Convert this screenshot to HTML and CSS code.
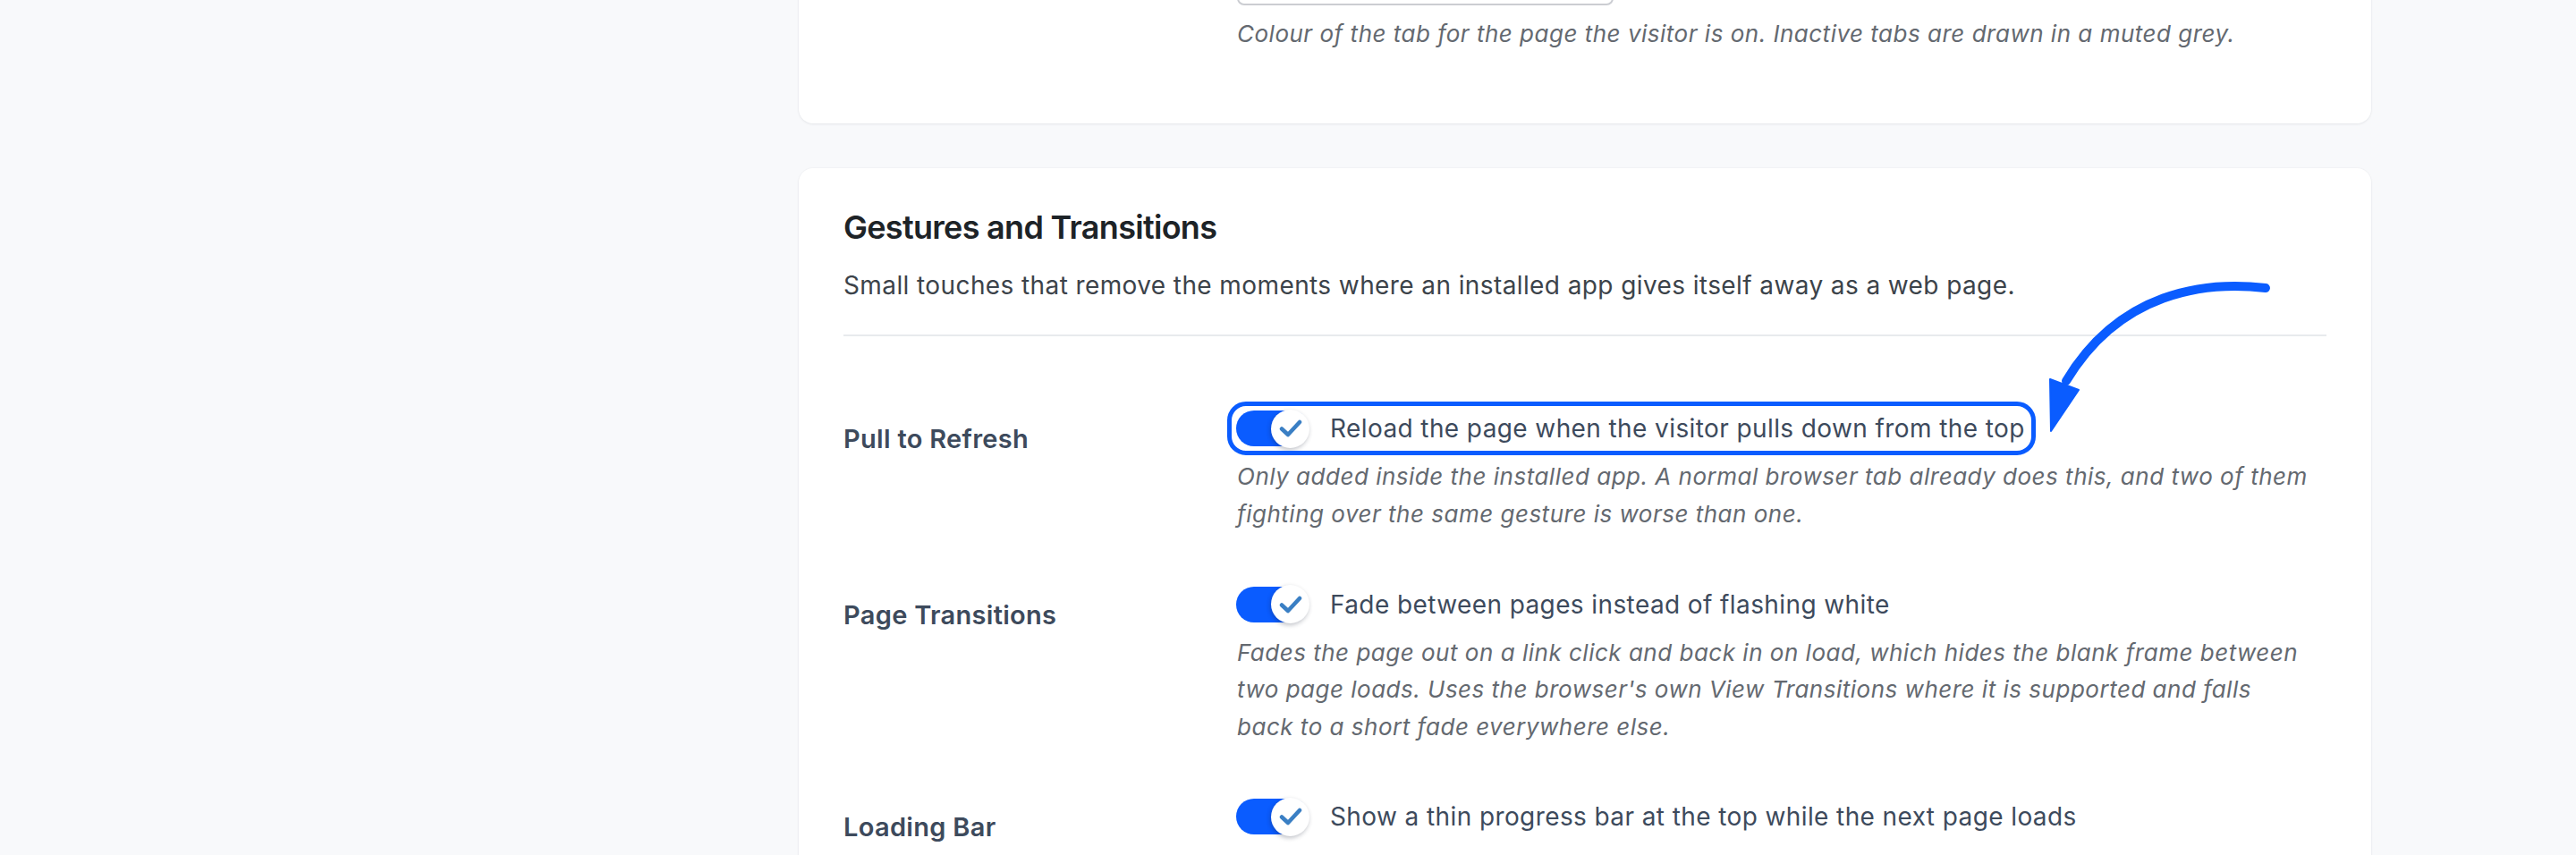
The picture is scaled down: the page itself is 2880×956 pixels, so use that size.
FILE: index.html
```html
<!DOCTYPE html>
<html lang="en">
<head>
<meta charset="utf-8">
<title>Gestures and Transitions</title>
<link rel="stylesheet" href="styles.css">
</head>
<body>
<div class="page">
  <main class="content">
    <section class="card card-partial">
      <div class="row">
        <div class="label"></div>
        <div class="field">
          <div class="input-box"></div>
          <p class="desc">Colour of the tab for the page the visitor is on. Inactive tabs are drawn in a muted grey.</p>
        </div>
      </div>
    </section>

    <section class="card card-main">
      <h2 class="card-title">Gestures and Transitions</h2>
      <p class="lead">Small touches that remove the moments where an installed app gives itself away as a web page.</p>
      <hr class="divider">
      <div class="rows">
        <div class="row">
          <div class="label">Pull to Refresh</div>
          <div class="field">
            <label class="toggle is-highlighted">
              <span class="switch"><span class="knob"><svg class="check" viewBox="0 0 26 20" width="26" height="20"><path d="M3 10.5 L10 17 L23 3"/></svg></span></span>
              <span class="toggle-text">Reload the page when the visitor pulls down from the top</span>
            </label>
            <p class="desc">Only added inside the installed app. A normal browser tab already does this, and two of them<br>fighting over the same gesture is worse than one.</p>
          </div>
        </div>
        <div class="row">
          <div class="label">Page Transitions</div>
          <div class="field">
            <label class="toggle">
              <span class="switch"><span class="knob"><svg class="check" viewBox="0 0 26 20" width="26" height="20"><path d="M3 10.5 L10 17 L23 3"/></svg></span></span>
              <span class="toggle-text">Fade between pages instead of flashing white</span>
            </label>
            <p class="desc">Fades the page out on a link click and back in on load, which hides the blank frame between<br>two page loads. Uses the browser's own View Transitions where it is supported and falls<br>back to a short fade everywhere else.</p>
          </div>
        </div>
        <div class="row">
          <div class="label">Loading Bar</div>
          <div class="field">
            <label class="toggle">
              <span class="switch"><span class="knob"><svg class="check" viewBox="0 0 26 20" width="26" height="20"><path d="M3 10.5 L10 17 L23 3"/></svg></span></span>
              <span class="toggle-text">Show a thin progress bar at the top while the next page loads</span>
            </label>
          </div>
        </div>
      </div>
      <svg class="arrow" viewBox="0 0 290 200" width="290" height="200">
        <path class="arrow-shaft" d="M263 22 C 195 14, 100 26, 40 126"/>
        <polygon class="arrow-head" points="22,124 54,136 23,182"/>
      </svg>
    </section>
  </main>
</div>
</body>
</html>
```

FILE: styles.css
```css
* { box-sizing: border-box; }

html, body {
  margin: 0;
  padding: 0;
}

body {
  background: #f8f9fb;
  font-family: Inter, "Liberation Sans", Arial, sans-serif;
  color: #3c434a;
  overflow: hidden;
  height: 956px;
}

.page {
  display: flex;
  padding-left: 893px;
}

.content {
  width: 1758px;
  display: flex;
  flex-direction: column;
  gap: 50px;
}

.card {
  background: #ffffff;
  border-radius: 16px;
  box-shadow: 0 1px 3px rgba(16, 24, 40, 0.07), 0 0 0 1px rgba(16, 24, 40, 0.015);
  padding: 0 50px;
}

.card-partial {
  margin-top: -104px;
  padding-top: 50px;
  padding-bottom: 79px;
}

.card-main {
  position: relative;
  padding-top: 43px;
  padding-bottom: 120px;
}

.row {
  display: grid;
  grid-template-columns: 440px 1fr;
}

.label {
  padding-top: 12px;
  font-size: 29px;
  line-height: 40px;
  font-weight: 600;
  letter-spacing: 0.3px;
  color: #3d4a5c;
}

.field {
  display: flex;
  flex-direction: column;
  align-items: flex-start;
}

.input-box {
  width: 421px;
  height: 60px;
  border: 2px solid #cbcdd2;
  border-radius: 8px;
  background: #fff;
}

.desc {
  margin: 11px 0 0;
  font-size: 26px;
  line-height: 41.6px;
  font-style: italic;
  letter-spacing: 0.5px;
  color: #646970;
  white-space: nowrap;
}

.card-title {
  margin: 0;
  font-size: 36px;
  line-height: 46.8px;
  font-weight: 600;
  color: #1d2327;
  letter-spacing: -0.7px;
}

.lead {
  margin: 21px 0 0;
  font-size: 28px;
  line-height: 42px;
  letter-spacing: 0.4px;
  color: #3c434a;
}

.divider {
  margin: 34px 0 0;
  border: 0;
  height: 2px;
  background: #e8eaed;
}

.rows {
  margin-top: 83px;
  display: flex;
  flex-direction: column;
  gap: 60px;
}

.rows .desc {
  margin-top: 13px;
}

.toggle {
  display: inline-flex;
  align-items: center;
  gap: 24px;
  height: 40px;
  border-radius: 11px;
  margin-left: -1px;
}

.toggle.is-highlighted {
  outline: 5px solid #0a5cff;
  outline-offset: 5px;
  padding-right: 2px;
}

.switch {
  width: 81px;
  height: 40px;
  border-radius: 20px;
  background: #0a5cff;
  display: flex;
  align-items: center;
  justify-content: flex-end;
}

.knob {
  width: 43px;
  height: 43px;
  margin-right: -1px;
  border-radius: 50%;
  background: #ffffff;
  box-shadow: -1px 2px 5px rgba(20, 30, 50, 0.28);
  display: flex;
  align-items: center;
  justify-content: center;
}

.check {
  display: block;
  fill: none;
  stroke: #3a7fc4;
  stroke-width: 4.5;
  stroke-linecap: round;
  stroke-linejoin: round;
}

.toggle-text {
  font-size: 28px;
  line-height: 40px;
  letter-spacing: 0.4px;
  color: #3d4a5c;
  white-space: nowrap;
}

.arrow {
  position: absolute;
  left: 1377px;
  top: 112px;
  overflow: visible;
}

.arrow-shaft {
  fill: none;
  stroke: #0a5cff;
  stroke-width: 10;
  stroke-linecap: round;
}

.arrow-head {
  fill: #0a5cff;
  stroke: #0a5cff;
  stroke-width: 2;
  stroke-linejoin: round;
}
```
